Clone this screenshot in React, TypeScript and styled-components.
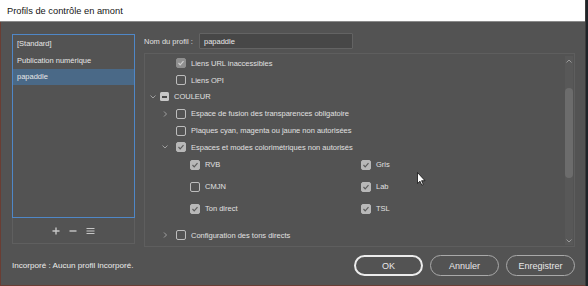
import styled, { createGlobalStyle } from 'styled-components';

const GlobalStyle = createGlobalStyle`
  html, body {
    margin: 0;
    padding: 0;
    background: #1f2328;
  }
  body {
    font-family: 'Liberation Sans', Arial, sans-serif;
  }
  * {
    box-sizing: border-box;
  }
`;

const Window = styled.div`
  width: 586px;
  height: 286px;
  display: flex;
  flex-direction: column;
  border-right: 1px solid #3b3b3b;
`;

const TitleBar = styled.div`
  height: 22px;
  flex: none;
  background: #ffffff;
  border-bottom: 1px solid #8a8a8a;
  display: flex;
  align-items: center;
  padding: 1px 0 0 7px;
  font-size: 9.3px;
  color: #151515;
`;

const Body = styled.div`
  flex: 1;
  background: #535353;
  border-left: 1px solid #6a3d33;
  border-bottom: 1px solid #6a3d33;
  padding: 12px 10px 0 11px;
  display: flex;
  flex-direction: column;
  color: #e0e0e0;
  font-size: 7.5px;
`;

const Top = styled.div`
  display: flex;
  gap: 9px;
`;

const LeftCol = styled.div`
  width: 123px;
  height: 210px;
  flex: none;
  display: flex;
  flex-direction: column;
  border: 1px solid #5f5f5f;
  border-top: none;
`;

const List = styled.div`
  height: 184px;
  margin: 0 -1px;
  border: 1px solid #4f87c7;
  padding-top: 0.5px;
`;

const Item = styled.div<{ $sel?: boolean }>`
  height: 16.5px;
  display: flex;
  align-items: center;
  padding-left: 4px;
  background: ${(p) => (p.$sel ? '#4a6987' : 'transparent')};
  color: #e6e6e6;
`;

const ListTools = styled.div`
  flex: 1;
  display: flex;
  align-items: center;
  justify-content: center;
  gap: 9px;
  color: #c6c6c6;
`;

const RightCol = styled.div`
  flex: 1;
  display: flex;
  flex-direction: column;
`;

const NameRow = styled.div`
  height: 15px;
  display: flex;
  align-items: center;
`;

const NameLabel = styled.span`
  width: 55px;
  flex: none;
`;

const NameInput = styled.div`
  width: 154px;
  height: 16px;
  margin-top: -1px;
  background: #474747;
  border: 1px solid #636363;
  border-radius: 1px;
  display: flex;
  align-items: center;
  padding-left: 4px;
  color: #e8e8e8;
`;

const Tree = styled.div`
  position: relative;
  margin-top: 4px;
  height: 194px;
  border: 1px solid #5e5e5e;
  display: flex;
`;

const TreeBody = styled.div`
  flex: 1;
  padding-top: 1px;
`;

const Row = styled.div<{ $indent: number; $gap?: number }>`
  height: 16.8px;
  display: flex;
  align-items: center;
  padding-left: ${(p) => p.$indent}px;
  margin-top: ${(p) => p.$gap ?? 0}px;
`;

const Twisty = styled.span<{ $pad: number }>`
  width: 14px;
  flex: none;
  display: flex;
  align-items: center;
  padding-left: ${(p) => p.$pad}px;
`;

const Box = styled.span<{ $on?: boolean; $dim?: boolean }>`
  width: 10px;
  height: 10px;
  flex: none;
  border-radius: 2px;
  border: 1px solid ${(p) => (p.$on ? (p.$dim ? '#8f8f8f' : '#b8b8b8') : '#bdbdbd')};
  background: ${(p) => (p.$on ? (p.$dim ? '#8f8f8f' : '#b8b8b8') : 'transparent')};
  display: flex;
  align-items: center;
  justify-content: center;
`;

const Mixed = styled.span`
  width: 9px;
  height: 9px;
  flex: none;
  border-radius: 1.5px;
  background: #c8c8c8;
  display: flex;
  align-items: center;
  justify-content: center;
  &::after {
    content: '';
    width: 5px;
    height: 1.5px;
    background: #4a4a4a;
  }
`;

const Label = styled.span`
  margin-left: 5px;
  white-space: nowrap;
`;

const SubGrid = styled.div`
  display: grid;
  grid-template-columns: 171px auto;
  grid-auto-rows: 22px;
  padding-left: 45px;
  margin-top: -2px;
`;

const Cell = styled.div`
  display: flex;
  align-items: center;
`;

const Scroll = styled.div`
  width: 8px;
  flex: none;
  margin: 2px 1px 1px 0;
  background: #585858;
  display: flex;
  flex-direction: column;
  align-items: center;
  justify-content: space-between;
  padding: 3px 0 2px;
  position: relative;
`;

const Thumb = styled.div`
  position: absolute;
  left: 0;
  right: 0;
  top: 32px;
  height: 90px;
  border-radius: 4px;
  background: #6c6c6c;
`;

const Cursor = styled.svg`
  position: absolute;
  left: 272px;
  top: 118px;
`;

const Bottom = styled.div`
  margin-top: 8px;
  height: 21px;
  display: flex;
  align-items: center;
  gap: 7px;
`;

const Embedded = styled.span`
  flex: 1;
  color: #ececec;
  font-size: 8.1px;
`;

const Button = styled.button<{ $main?: boolean }>`
  width: 69px;
  height: 21px;
  border-radius: 11px;
  background: transparent;
  border: ${(p) => (p.$main ? '2px solid #ececec' : '1px solid #a9a9a9')};
  color: #e8e8e8;
  font-family: 'Liberation Sans', Arial, sans-serif;
  font-size: 9px;
  padding: 0;
`;

const Chevron = ({ dir }: { dir: 'down' | 'right' }) =>
  dir === 'down' ? (
    <svg width="6" height="4" viewBox="0 0 6 4">
      <polyline points="0.5,0.5 3,3 5.5,0.5" fill="none" stroke="#a0a0a0" strokeWidth="1" />
    </svg>
  ) : (
    <svg width="6" height="6" viewBox="0 0 6 6">
      <polyline points="2,0.5 4.5,3 2,5.5" fill="none" stroke="#a0a0a0" strokeWidth="1" />
    </svg>
  );

const Check = ({ on, dim }: { on?: boolean; dim?: boolean }) => (
  <Box $on={on} $dim={dim}>
    {on && (
      <svg width="8" height="8" viewBox="0 0 8 8">
        <polyline
          points="1.5,4 3.2,5.8 6.5,2.2"
          fill="none"
          stroke={dim ? '#cfcfcf' : '#5c5c5c'}
          strokeWidth="1.2"
        />
      </svg>
    )}
  </Box>
);

type Node = {
  label: string;
  level: 0 | 1;
  on?: boolean;
  dim?: boolean;
  mixed?: boolean;
  twisty?: 'down' | 'right';
};

const rows: Node[] = [
  { label: 'Liens URL inaccessibles', level: 1, on: true, dim: true },
  { label: 'Liens OPI', level: 1 },
  { label: 'COULEUR', level: 0, mixed: true, twisty: 'down' },
  { label: 'Espace de fusion des transparences obligatoire', level: 1, twisty: 'right' },
  { label: 'Plaques cyan, magenta ou jaune non autorisées', level: 1 },
  { label: 'Espaces et modes colorimétriques non autorisés', level: 1, on: true, twisty: 'down' },
];

const spaces = [
  { label: 'RVB', on: true },
  { label: 'Gris', on: true },
  { label: 'CMJN', on: false },
  { label: 'Lab', on: true },
  { label: 'Ton direct', on: true },
  { label: 'TSL', on: true },
];

const TreeRow = ({ node, gap }: { node: Node; gap?: number }) => (
  <Row $indent={node.level === 0 ? 1 : 17} $gap={gap}>
    <Twisty $pad={node.level === 0 ? 4 : 0}>{node.twisty && <Chevron dir={node.twisty} />}</Twisty>
    {node.mixed ? <Mixed /> : <Check on={node.on} dim={node.dim} />}
    <Label>{node.label}</Label>
  </Row>
);

const App = () => (
  <Window>
    <GlobalStyle />
    <TitleBar>Profils de contrôle en amont</TitleBar>
    <Body>
      <Top>
        <LeftCol>
          <List>
            <Item>[Standard]</Item>
            <Item>Publication numérique</Item>
            <Item $sel>papaddle</Item>
          </List>
          <ListTools>
            <svg width="8" height="8" viewBox="0 0 8 8">
              <path d="M4 0.5V7.5M0.5 4H7.5" stroke="#c6c6c6" strokeWidth="1.4" />
            </svg>
            <svg width="8" height="8" viewBox="0 0 8 8">
              <path d="M0.5 4H7.5" stroke="#c6c6c6" strokeWidth="1.4" />
            </svg>
            <svg width="9" height="8" viewBox="0 0 9 8">
              <path d="M0.5 1.5H8.5M0.5 4H8.5M0.5 6.5H8.5" stroke="#c6c6c6" strokeWidth="1" />
            </svg>
          </ListTools>
        </LeftCol>
        <RightCol>
          <NameRow>
            <NameLabel>Nom du profil :</NameLabel>
            <NameInput>papaddle</NameInput>
          </NameRow>
          <Tree>
            <TreeBody>
              {rows.map((r) => (
                <TreeRow key={r.label} node={r} />
              ))}
              <SubGrid>
                {spaces.map((s) => (
                  <Cell key={s.label}>
                    <Check on={s.on} />
                    <Label>{s.label}</Label>
                  </Cell>
                ))}
              </SubGrid>
              <TreeRow node={{ label: 'Configuration des tons directs', level: 1, twisty: 'right' }} gap={7} />
            </TreeBody>
            <Scroll>
              <svg width="6" height="4" viewBox="0 0 6 4">
                <polyline points="0.5,3.5 3,1 5.5,3.5" fill="none" stroke="#9a9a9a" strokeWidth="1" />
              </svg>
              <Thumb />
              <svg width="6" height="4" viewBox="0 0 6 4">
                <polyline points="0.5,0.5 3,3 5.5,0.5" fill="none" stroke="#9a9a9a" strokeWidth="1" />
              </svg>
            </Scroll>
            <Cursor width="9" height="14" viewBox="0 0 9 14">
              <path d="M0.5 0.5V11.5L3 9.2L4.8 13.2L6.3 12.5L4.6 8.7H8Z" fill="#ffffff" stroke="#111" strokeWidth="0.8" />
            </Cursor>
          </Tree>
        </RightCol>
      </Top>
      <Bottom>
        <Embedded>Incorporé : Aucun profil incorporé.</Embedded>
        <Button $main>OK</Button>
        <Button>Annuler</Button>
        <Button>Enregistrer</Button>
      </Bottom>
    </Body>
  </Window>
);

export default App;
